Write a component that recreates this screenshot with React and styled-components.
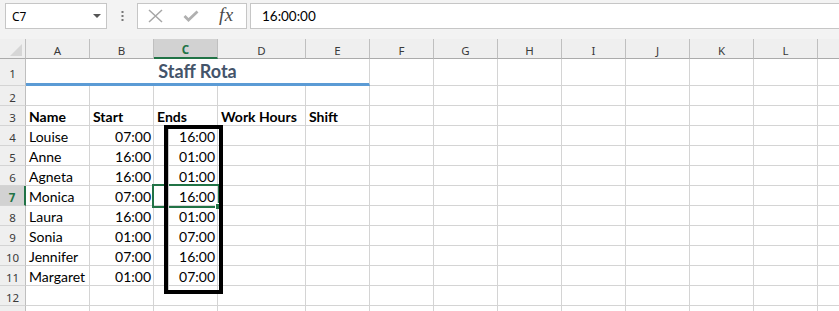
import React from 'react';
import styled, { createGlobalStyle, css } from 'styled-components';

const GlobalStyle = createGlobalStyle`
  html, body {
    margin: 0;
    padding: 0;
    background: #fff;
  }
  body {
    font-family: 'Lato', 'Liberation Sans', sans-serif;
  }
`;

const Window = styled.div`
  width: 839px;
  height: 311px;
  overflow: hidden;
  display: flex;
  flex-direction: column;
  background: #fff;
`;

const FormulaBar = styled.div`
  display: flex;
  align-items: flex-start;
  height: 39px;
  flex: none;
  box-sizing: border-box;
  padding: 3px 0 0 5px;
  background: #f3f3f3;
`;

const NameBox = styled.div`
  box-sizing: border-box;
  width: 102px;
  height: 26px;
  display: flex;
  align-items: center;
  padding: 0 5px 0 6px;
  background: #fff;
  border: 1px solid #c6c6c6;
  font-family: 'Noto Sans', sans-serif;
  font-size: 12px;
  color: #000;
`;

const DropArrow = styled.span`
  margin-left: auto;
  width: 0;
  height: 0;
  border-left: 4px solid transparent;
  border-right: 4px solid transparent;
  border-top: 4px solid #555;
`;

const Grip = styled.div`
  width: 30px;
  height: 26px;
  display: flex;
  align-items: center;
  justify-content: center;
`;

const ButtonBox = styled.div`
  box-sizing: border-box;
  width: 110px;
  height: 26px;
  display: flex;
  align-items: center;
  gap: 20px;
  padding-left: 10px;
  background: #fff;
  border: 1px solid #c6c6c6;
`;

const Fx = styled.span`
  font-family: 'Liberation Serif', 'DejaVu Serif', serif;
  font-style: italic;
  font-size: 19px;
  color: #4a4a4a;
  line-height: 20px;
  margin-top: -2px;
  letter-spacing: 0.5px;
`;

const FormulaInput = styled.div`
  box-sizing: border-box;
  flex: 1;
  height: 26px;
  margin-left: 3px;
  margin-right: -4px;
  display: flex;
  align-items: center;
  padding-left: 11px;
  background: #fff;
  border: 1px solid #c6c6c6;
  font-family: 'Lato', sans-serif;
  font-size: 13.5px;
  color: #000;
`;

const Sheet = styled.div`
  position: relative;
  display: grid;
  grid-template-columns: 26px 64px 64px 64px 88px repeat(9, 64px);
  grid-template-rows: 20px 27px repeat(12, 20px);
`;

const Corner = styled.div`
  box-sizing: border-box;
  background: #efefef;
  border-right: 1px solid #bfbfbf;
  border-bottom: 1px solid #ababab;
  display: flex;
  align-items: flex-end;
  justify-content: flex-end;
  padding: 0 3px 2px 0;
`;

const ColHead = styled.div`
  box-sizing: border-box;
  display: flex;
  align-items: center;
  justify-content: center;
  padding-top: 3px;
  background: ${(p) => (p.$active ? '#d2d2d2' : '#efefef')};
  border-right: 1px solid #bfbfbf;
  border-bottom: ${(p) => (p.$active ? '2px solid #217346' : '1px solid #ababab')};
  font-family: 'Noto Sans', sans-serif;
  font-size: 11.5px;
  font-weight: ${(p) => (p.$active ? 700 : 400)};
  color: ${(p) => (p.$active ? '#217346' : '#3a3a3a')};
`;

const RowHead = styled.div`
  box-sizing: border-box;
  display: flex;
  align-items: center;
  justify-content: center;
  padding-top: 3px;
  background: ${(p) => (p.$active ? '#d2d2d2' : '#efefef')};
  border-right: ${(p) => (p.$active ? '2px solid #217346' : '1px solid #bfbfbf')};
  border-bottom: 1px solid #d4d4d4;
  font-family: 'Noto Sans', sans-serif;
  font-size: 11.5px;
  font-weight: ${(p) => (p.$active ? 700 : 400)};
  color: ${(p) => (p.$active ? '#217346' : '#3a3a3a')};
`;

const Cell = styled.div`
  box-sizing: border-box;
  border-right: 1px solid #d4d4d4;
  border-bottom: 1px solid #d4d4d4;
  padding: 1px ${(p) => (p.$align === 'right' ? '2px' : '3px')} 0;
  text-align: ${(p) => p.$align || 'left'};
  font-family: 'Lato', sans-serif;
  font-size: 14px;
  line-height: 19px;
  font-weight: ${(p) => (p.$bold ? 700 : 400)};
  color: #000;
  white-space: nowrap;

  ${(p) =>
    p.$selected &&
    css`
      position: relative;
      z-index: 1;
      outline: 2px solid #217346;
      outline-offset: 0;

      &::after {
        content: '';
        position: absolute;
        right: -4px;
        bottom: -4px;
        width: 5px;
        height: 5px;
        background: #217346;
        border-left: 1px solid #fff;
        border-top: 1px solid #fff;
      }
    `}
`;

const TitleCell = styled.div`
  box-sizing: border-box;
  grid-column: span 5;
  border-right: 1px solid #d4d4d4;
  border-bottom: 3px solid #5b9bd5;
  text-align: center;
  font-family: 'Lato', sans-serif;
  font-size: 18px;
  font-weight: 700;
  line-height: 24px;
  color: #44546a;
`;

const ShapeBox = styled.div`
  position: absolute;
  z-index: 2;
  left: 164px;
  top: 86px;
  width: 59px;
  height: 169px;
  box-sizing: border-box;
  border: 4px solid #000;
  box-shadow: inset 1px 0 0 #c8c8c8;
  pointer-events: none;
`;

// last column (M) runs off the right edge, so its letter is never seen
const COLS = ['A', 'B', 'C', 'D', 'E', 'F', 'G', 'H', 'I', 'J', 'K', 'L', ''];

const staff = [
  ['Louise', '07:00', '16:00'],
  ['Anne', '16:00', '01:00'],
  ['Agneta', '16:00', '01:00'],
  ['Monica', '07:00', '16:00'],
  ['Laura', '16:00', '01:00'],
  ['Sonia', '01:00', '07:00'],
  ['Jennifer', '07:00', '16:00'],
  ['Margaret', '01:00', '07:00'],
];

const headings = ['Name', 'Start', 'Ends', 'Work Hours', 'Shift'];

const emptyCells = (from, row) =>
  COLS.slice(from).map((c, i) => <Cell key={`${from + i}-${row}`} />);

const App = () => {
  return (
    <Window>
      <GlobalStyle />
      <FormulaBar>
        <NameBox>
          C7
          <DropArrow />
        </NameBox>
        <Grip>
          <svg width="3" height="10" viewBox="0 0 3 10">
            <rect x="0.5" y="0" width="2" height="2" fill="#777" />
            <rect x="0.5" y="4" width="2" height="2" fill="#777" />
            <rect x="0.5" y="8" width="2" height="2" fill="#777" />
          </svg>
        </Grip>
        <ButtonBox>
          <svg width="15" height="14" viewBox="0 0 15 14">
            <path d="M1 1 L14 13 M14 1 L1 13" stroke="#a6a6a6" strokeWidth="1.5" fill="none" />
          </svg>
          <svg width="16" height="12" viewBox="0 0 16 12">
            <path d="M1.5 6 L5.5 10 L14.5 1.5" stroke="#b0b0b0" strokeWidth="2.8" fill="none" />
          </svg>
          <Fx>fx</Fx>
        </ButtonBox>
        <FormulaInput>16:00:00</FormulaInput>
      </FormulaBar>

      <Sheet>
        <Corner>
          <svg width="12" height="12" viewBox="0 0 12 12">
            <polygon points="12,0 12,12 0,12" fill="#d6d6d6" />
          </svg>
        </Corner>
        {COLS.map((c, i) => (
          <ColHead key={i} $active={c === 'C'}>
            {c}
          </ColHead>
        ))}

        <RowHead>1</RowHead>
        <TitleCell>Staff Rota</TitleCell>
        {emptyCells(5, 1)}

        <RowHead>2</RowHead>
        {emptyCells(0, 2)}

        <RowHead>3</RowHead>
        {headings.map((h) => (
          <Cell key={h} $bold>
            {h}
          </Cell>
        ))}
        {emptyCells(5, 3)}

        {staff.map(([name, start, end], i) => {
          const row = i + 4;
          return (
            <React.Fragment key={name}>
              <RowHead $active={row === 7}>{row}</RowHead>
              <Cell>{name}</Cell>
              <Cell $align="right">{start}</Cell>
              <Cell $align="right" $selected={row === 7}>
                {end}
              </Cell>
              {emptyCells(3, row)}
            </React.Fragment>
          );
        })}

        <RowHead>12</RowHead>
        {emptyCells(0, 12)}
        {/* row 13 only shows a sliver at the bottom edge */}
        <RowHead />
        {emptyCells(0, 13)}

        <ShapeBox />
      </Sheet>
    </Window>
  );
};

export default App;
